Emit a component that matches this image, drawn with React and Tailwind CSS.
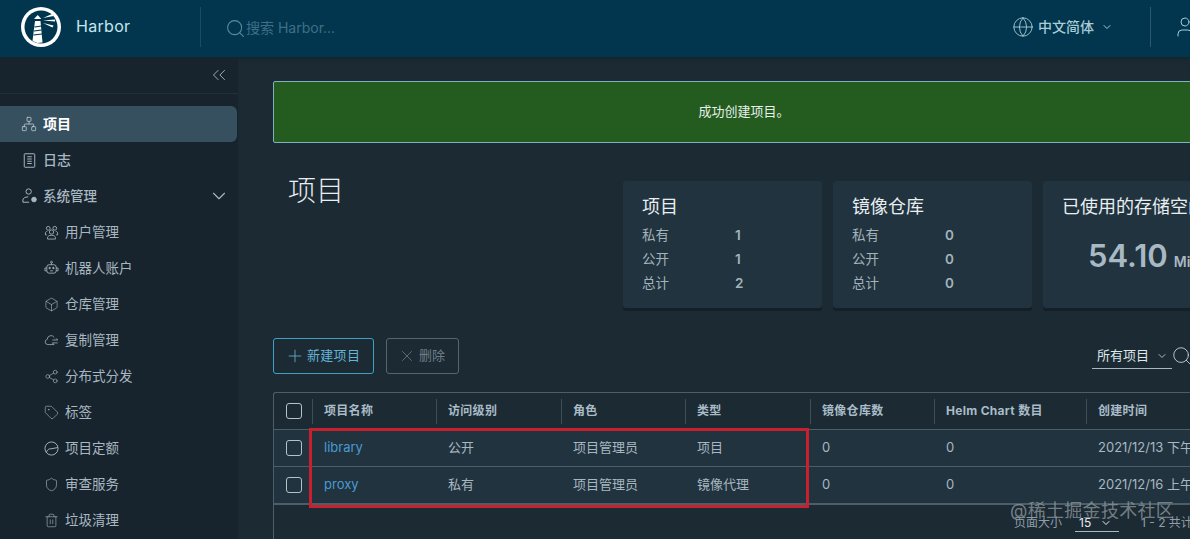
import React from 'react';
import {
    Box, ChevronDown, ChevronsLeft, Globe, Network, Plus, Search,
    Share2, Shield, Tag, Trash2, User, X,
} from 'lucide-react';

const logIcon = (
    <svg viewBox="0 0 16 20" className="h-[15px] w-[13px]" fill="none" stroke="currentColor" strokeWidth="1.3">
        <rect x="1" y="1" width="14" height="18" rx="1" />
        <path d="M5 5h6M5 8h6M5 11h6M5 14h6" />
    </svg>
);

const adminIcon = (
    <svg viewBox="0 0 18 18" className="h-[16px] w-[16px]" fill="none" stroke="currentColor" strokeWidth="1.1">
        <circle cx="7.5" cy="4" r="3" />
        <path d="M1 16v-2.5c0-2 2.5-3.5 6-3.5" />
        <path d="M1 16h7" />
        <circle cx="13.5" cy="13" r="2.6" fill="currentColor" />
    </svg>
);

const quotaIcon = (
    <svg viewBox="0 0 16 16" className="h-[15px] w-[15px]" fill="none" stroke="currentColor" strokeWidth="1">
        <circle cx="8" cy="8" r="7" />
        <path d="M2.5 12.2C3.5 9.5 5 8 7.5 8.3L14.8 7" />
    </svg>
);

const usersIcon = (
    <svg viewBox="0 0 16 16" className="h-[15px] w-[15px]" fill="none" stroke="currentColor" strokeWidth="0.9">
        <circle cx="4.5" cy="3.5" r="2" />
        <circle cx="11.5" cy="3.5" r="2" />
        <circle cx="8" cy="7.5" r="2.3" />
        <path d="M3.8 15v-1.5c0-1.5 1.5-2.5 4.2-2.5s4.2 1 4.2 2.5V15z" />
        <path d="M3 10.5H1.5V8.5c0-.8.8-1.5 2-1.8M13 10.5h1.5V8.5c0-.8-.8-1.5-2-1.8" />
    </svg>
);

const botIcon = (
    <svg viewBox="0 0 16 16" className="h-[16px] w-[16px]" fill="none" stroke="currentColor" strokeWidth="0.9">
        <rect x="3" y="4.5" width="10" height="9" rx="2.5" />
        <circle cx="8" cy="1.8" r="1" />
        <path d="M8 2.8v1.7M3 8H1v3h2M13 8h2v3h-2M6.5 11h3" />
        <circle cx="6" cy="8" r="0.8" fill="currentColor" />
        <circle cx="10" cy="8" r="0.8" fill="currentColor" />
    </svg>
);

const replicationIcon = (
    <svg viewBox="0 0 18 16" className="h-[14px] w-[16px]" fill="none" stroke="currentColor" strokeWidth="0.9">
        <path d="M12 13.5H4.5a3.2 3.2 0 0 1-.6-6.3A4.5 4.5 0 0 1 12.3 5" />
        <path d="M10 8h6.5l-2-2M16.5 11.5H10l2 2" />
    </svg>
);

const subItems = [
    { label: '用户管理', icon: usersIcon },
    { label: '机器人账户', icon: botIcon },
    { label: '仓库管理', icon: <Box size={15} strokeWidth={1} /> },
    { label: '复制管理', icon: replicationIcon },
    { label: '分布式分发', icon: <Share2 size={15} strokeWidth={1} /> },
    { label: '标签', icon: <Tag size={15} strokeWidth={1} /> },
    { label: '项目定额', icon: quotaIcon },
    { label: '审查服务', icon: <Shield size={15} strokeWidth={1} /> },
    { label: '垃圾清理', icon: <Trash2 size={15} strokeWidth={1} /> },
];

const columns = ['项目名称', '访问级别', '角色', '类型', '镜像仓库数', 'Helm Chart 数目', '创建时间'];

const rows = [
    ['library', '公开', '项目管理员', '项目', '0', '0', '2021/12/13 下午'],
    ['proxy', '私有', '项目管理员', '镜像代理', '0', '0', '2021/12/16 上午'],
];

const gridClasses = 'grid grid-cols-[38px_124px_125px_124px_125px_124px_152px_200px]';

function Logo() {
    return (
        <svg viewBox="0 0 40 40" className="h-10 w-10">
            <circle cx="20" cy="20" r="20" fill="white" />
            <circle cx="20" cy="20" r="16.5" fill="#00364d" />
            <path d="M11.5 34l2.5-20h5.5l2 21.5-5 .5z" fill="white" />
            <path d="M13 12l3.7-4 3.7 4z" fill="white" />
            <path d="M13.5 20l7-1M13 24l7.5-1M12.5 28l8.5-1" stroke="#00364d" strokeWidth="1.2" />
            <path d="M22 11l9-4 1.5 2zM22 13.5l12-1v2zM22 16l10.5 2.5-1 2z" fill="white" />
        </svg>
    );
}

function Header() {
    return (
        <header className="flex h-[57px] shrink-0 items-center bg-[#01364e] pb-[3px]">
            <div className="flex h-[40px] w-[201px] items-center border-r border-[#1d4c62]">
                <div className="ml-[21px]"><Logo /></div>
                <span className="ml-[15px] pb-[2px] text-base tracking-[0.3px] text-[#c5e6ee]">Harbor</span>
            </div>
            <div className="ml-[24px] mt-[2px] flex items-center text-[#3f6f86]">
                <Search size={21} strokeWidth={1.2} className="text-[#5c8ba3]" />
                <span className="text-sm">搜索 Harbor...</span>
            </div>
            <div className="ml-auto flex items-center">
                <Globe size={22} strokeWidth={1} className="text-[#a3cbd8]" />
                <span className="ml-[4px] text-sm font-medium text-[#a9cdd8]">中文简体</span>
                <ChevronDown size={12} className="ml-[7px] text-[#a3cbd8]" />
                <div className="ml-[37px] h-10 border-l border-[#2b5a70]" />
                <User size={24} strokeWidth={1} className="ml-[22px] mr-[-7px] shrink-0 text-[#a3cbd8]" />
            </div>
        </header>
    );
}

function Sidebar() {
    return (
        <aside className="flex h-full w-[238px] shrink-0 flex-col bg-[#17232d] text-[#a8b8c1]">
            <div className="flex h-[37px] shrink-0 items-center justify-end border-b border-[#232f39] pr-[8px]">
                <ChevronsLeft size={22} strokeWidth={1} />
            </div>
            <div className="mr-[1px] mt-3 flex h-9 shrink-0 items-center rounded-r-md bg-[#36505f] pl-[21px] text-sm font-bold text-white">
                <Network size={16} strokeWidth={1.1} className="text-[#c7d3da]" />
                <span className="ml-[6px]">项目</span>
            </div>
            <div className="flex h-9 shrink-0 items-center pl-[23px] text-sm font-medium">
                {logIcon}
                <span className="ml-[7px]">日志</span>
            </div>
            <div className="flex h-9 shrink-0 items-center pl-[22px] pr-[8px] text-[13.5px] font-medium">
                {adminIcon}
                <span className="ml-[5px]">系统管理</span>
                <ChevronDown size={22} strokeWidth={1.2} className="ml-auto" />
            </div>
            {subItems.map((item) => (
                <div key={item.label} className="flex h-9 shrink-0 items-center pl-[44px] text-[13.5px]">
                    <span className="flex w-[15px] justify-center">{item.icon}</span>
                    <span className="ml-[6px]">{item.label}</span>
                </div>
            ))}
        </aside>
    );
}

function StatCard({ title, values }) {
    return (
        <div className="h-[127px] w-[199px] shrink-0 rounded-[3px] bg-[#21333e] px-[19px] pt-[14px] shadow-[0_3px_0_#141f27]">
            <div className="text-lg leading-6 text-[#e8eef1]">{title}</div>
            <div className="mt-[4px] flex flex-col">
                {values.map(([label, value]) => (
                    <div key={label} className="flex h-6 items-center text-[13.5px] text-[#a3b3bc]">
                        <span className="w-[93px]">{label}</span>
                        <span className="font-semibold">{value}</span>
                    </div>
                ))}
            </div>
        </div>
    );
}

function Checkbox() {
    return <div className="h-4 w-4 rounded-[3px] border border-[#b4c2ca]" />;
}

function ProjectTable() {
    return (
        <div className="mt-[18px] rounded-t-[3px] border-l border-t border-[#4d5e68] text-[13px] text-[#a8b8c1]">
            <div className={`${gridClasses} h-[37px] items-center border-b border-[#4d5e68]`}>
                <div className="flex justify-center pl-[2px]"><Checkbox /></div>
                {columns.map((col) => (
                    <div key={col} className="flex h-[25px] items-center border-l border-[#3d4e58] pl-[11px] text-xs font-bold tracking-[0.3px] text-[#a9bcc8]">
                        {col}
                    </div>
                ))}
            </div>
            {rows.map((row) => (
                <div key={row[0]} className={`${gridClasses} h-[37px] items-center border-b border-[#4d5e68] bg-[#21333e]`}>
                    <div className="flex justify-center pl-[2px]"><Checkbox /></div>
                    {row.map((cell, i) => (
                        <div key={i} className={i === 0 ? 'pl-3 text-[#4a9bd4]' : 'pl-3'}>{cell}</div>
                    ))}
                </div>
            ))}
            <div className="flex h-9 items-center border-t border-[#4d5e68] pl-[740px] pt-[1px] text-xs text-[#8f9fa8]">
                <span>页面大小</span>
                <span className="ml-[13px] flex w-11 items-center gap-[9px] border-b border-[#a8b8c1] pl-[4px] text-[#e8eef1]">
                    15 <ChevronDown size={12} />
                </span>
                <span className="ml-[22px]">1 - 2 共计 2 条记录</span>
            </div>
        </div>
    );
}

function Main() {
    return (
        <main className="h-full min-w-0 flex-1 overflow-hidden bg-[#1c2a33] pl-[35px] pt-6 shadow-[inset_0_6px_6px_-6px_#141f27]">
            <div className="w-[1100px]">
                <div className="flex h-[62px] items-center justify-center rounded-[2px] border border-[#7fb0c4] bg-[#245c20] pr-[158px] text-[13px] text-[#e8f0ea]">
                    成功创建项目。
                </div>
                <div className="mt-[38px] flex h-[127px] items-start">
                    <h1 className="ml-[15px] w-[335px] text-[28px] leading-[20px] font-light text-[#e8eef1]">项目</h1>
                    <div className="flex gap-[11px]">
                        <StatCard title="项目" values={[['私有', '1'], ['公开', '1'], ['总计', '2']]} />
                        <StatCard title="镜像仓库" values={[['私有', '0'], ['公开', '0'], ['总计', '0']]} />
                        <div className="h-[127px] w-[199px] shrink-0 rounded-[3px] bg-[#21333e] px-[19px] pt-[14px] shadow-[0_3px_0_#141f27]">
                            <div className="whitespace-nowrap text-lg leading-6 text-[#e8eef1]">已使用的存储空间</div>
                            <div className="ml-[26px] mt-[19px] flex items-baseline gap-[6px] text-[#a9b9c4]">
                                <span className="text-[31px] font-semibold leading-9">54.10</span>
                                <span className="text-sm font-semibold">MiB</span>
                            </div>
                        </div>
                    </div>
                </div>
                <div className="mt-[30px] flex h-9 items-center">
                    <button type="button" className="flex h-9 w-[101px] items-center gap-[2px] rounded-[3px] border border-[#3f9fc4] pl-[11px] text-[13px] tracking-[0.3px] text-[#64b3d8]">
                        <Plus size={20} strokeWidth={1} /> 新建项目
                    </button>
                    <button type="button" className="ml-3 flex h-9 w-[73px] items-center gap-[3px] rounded-[3px] border border-[#56656f] pl-[11px] text-[13px] text-[#6f7f89]">
                        <X size={18} strokeWidth={1} /> 删除
                    </button>
                    <div className="ml-[633px] flex h-[26px] w-20 items-center gap-[7px] border-b border-[#a8b8c1] pl-[5px] text-[13px] text-[#dfe7ea]">
                        所有项目 <ChevronDown size={12} className="text-[#a8b8c1]" />
                    </div>
                    <Search size={22} strokeWidth={1} className="ml-[-1px] text-[#c3d0d7]" />
                </div>
                <ProjectTable />
            </div>
        </main>
    );
}

export default function App() {
    return (
        <div className="relative flex h-[539px] w-[1190px] flex-col overflow-hidden font-[Inter,'Noto_Sans_CJK_SC',sans-serif]">
            <Header />
            <div className="flex min-h-0 flex-1">
                <Sidebar />
                <Main />
            </div>
            {/* red highlight drawn on top of the screenshot */}
            <div className="absolute left-[309px] top-[428px] h-[80px] w-[500px] border-[3px] border-[#c8202e]" />
            <div className="absolute left-[1010px] top-[497px] text-lg tracking-[0.3px] text-[#8a959c]/80">@稀土掘金技术社区</div>
        </div>
    );
}
